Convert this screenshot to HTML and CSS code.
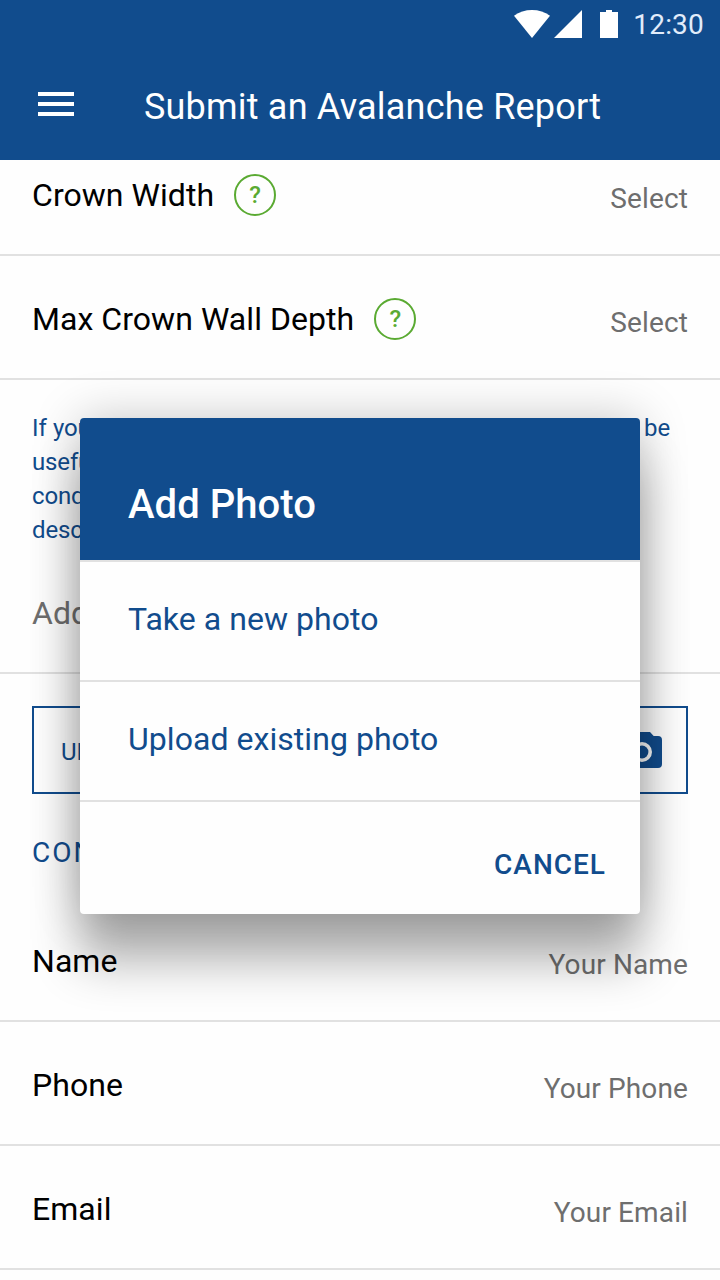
FILE: index.html
```
<!DOCTYPE html>
<html lang="en">
<head>
<meta charset="utf-8">
<title>Submit an Avalanche Report</title>
<link rel="stylesheet" href="styles.css">
</head>
<body>
<main class="screen">
  <header class="appbar">
    <div class="status">
      <svg class="status-icons" width="104" height="28" viewBox="0 0 104 28" fill="#fff">
        <path d="M0 5.800C5.200 2 11.200 0 18 0s12.800 2 18 5.800L18 28Z"/>
        <path d="M40 28 68 0v28Z"/>
        <path d="M86 2h6V0h6v2h6v26H86Z"/>
      </svg>
      <span class="clock">12:30</span>
    </div>
    <div class="toolbar">
      <svg class="menu" width="36" height="24" viewBox="0 0 36 24" fill="#fff"><path d="M0 0h36v4H0zM0 10h36v4H0zM0 20h36v4H0z"/></svg>
      <h1 class="title">Submit an Avalanche Report</h1>
    </div>
  </header>
  <section class="form">
    <div class="row row-first"><span class="label">Crown Width</span><span class="help">?</span><span class="value">Select</span></div>
    <div class="row"><span class="label">Max Crown Wall Depth</span><span class="help">?</span><span class="value">Select</span></div>
    <p class="note"><span class="note-line">If you would like to add any useful information that would be</span>useful<br>cond<br>desc</p>
    <div class="comment">Add</div>
    <button class="upload"><span>UPL</span>
      <svg width="40" height="36" viewBox="0 0 40 36" fill="#114c8d" fill-rule="evenodd"><path d="M14 0 10.340 4H4a4 4 0 0 0-4 4v24a4 4 0 0 0 4 4h32a4 4 0 0 0 4-4V8a4 4 0 0 0-4-4h-4.340L28 0ZM20 10a10 10 0 1 1 0 20a10 10 0 1 1 0-20Z"/><circle cx="20" cy="20" r="6.400"/></svg>
    </button>
    <h2 class="section">CONTACT</h2>
    <div class="row"><span class="label">Name</span><span class="value">Your Name</span></div>
    <div class="row"><span class="label">Phone</span><span class="value">Your Phone</span></div>
    <div class="row"><span class="label">Email</span><span class="value">Your Email</span></div>
  </section>
  <div class="dialog" role="dialog">
    <h2 class="dialog-title">Add Photo</h2>
    <div class="option">Take a new photo</div>
    <div class="option">Upload existing photo</div>
    <div class="actions">CANCEL</div>
  </div>
</main>
</body>
</html>
```
FILE: styles.css
```
* { box-sizing: border-box; }
body { margin: 0; font-family: Roboto, sans-serif; background: #fefefe; }
h1, h2, p { margin: 0; font-weight: 400; }
svg { display: block; flex: none; }
.screen { position: relative; width: 720px; height: 1280px; overflow: hidden; background: #fefefe; }
.appbar { height: 160px; background: #114c8d; color: #fff; }
.status { display: flex; justify-content: flex-end; height: 48px; padding: 10px 16px 0 0; }
.clock { margin-left: 15px; font-size: 28px; line-height: 30px; letter-spacing: .2px; color: #e2ecfb; }
.toolbar { display: flex; align-items: center; height: 112px; padding: 0 38px; }
.title { margin-left: 70px; padding-top: 6px; font-size: 36px; line-height: 44px; letter-spacing: .2px; white-space: nowrap; }
.row { display: flex; align-items: center; height: 124px; padding: 4px 32px 0; border-bottom: 2px solid #e1e1e1; }
.row-first { height: 96px; padding: 0 32px 24px; }
.label { font-size: 32px; line-height: 40px; letter-spacing: .05px; color: #000; }
.help { width: 42px; height: 42px; margin-left: 20px; border: 2px solid #5aaa32; border-radius: 50%; font-size: 24px; font-weight: 500; line-height: 38px; text-align: center; color: #5aaa32; }
.value { margin-left: auto; padding-top: 7px; font-size: 28px; line-height: 34px; letter-spacing: .12px; color: #6e6e6e; }
.note { padding: 31px 32px 0; font-size: 24px; line-height: 34px; letter-spacing: -.15px; color: #114c8d; white-space: nowrap; }
.note-line { display: block; width: 638px; height: 34px; text-align-last: justify; white-space: normal; }
.comment { height: 127px; padding-top: 46px; padding-left: 32px; border-bottom: 2px solid #e1e1e1; font-size: 32px; line-height: 40px; color: #6e6e6e; }
.upload { display: flex; justify-content: space-between; align-items: center; width: 656px; height: 88px; margin: 32px 32px 0; padding: 0 24px 0 27px; border: 2px solid #114c8d; background: none; font: 400 24px Roboto, sans-serif; color: #114c8d; }
.upload span { padding-top: 4px; }
.section { height: 104px; padding: 42px 32px 0; font-size: 28px; line-height: 34px; letter-spacing: 2px; color: #114c8d; }
.dialog { position: absolute; left: 80px; top: 418px; width: 560px; height: 496px; overflow: hidden; border-radius: 4px; background: #fefefe; color: #114c8d; box-shadow: 0 48px 48px rgba(0,0,0,.3), 0 0 48px rgba(0,0,0,.22); }
.dialog-title { height: 142px; padding: 63px 48px 0; background: #114c8d; color: #fff; font-size: 40px; font-weight: 500; line-height: 48px; letter-spacing: .05px; }
.option { height: 120px; padding: 37px 48px 0; border-top: 2px solid #e1e1e1; font-size: 32px; line-height: 40px; letter-spacing: .05px; }
.actions { height: 114px; padding: 46px 34px 0; border-top: 2px solid #e1e1e1; font-size: 28px; font-weight: 500; line-height: 34px; letter-spacing: 1px; text-align: right; }
```
